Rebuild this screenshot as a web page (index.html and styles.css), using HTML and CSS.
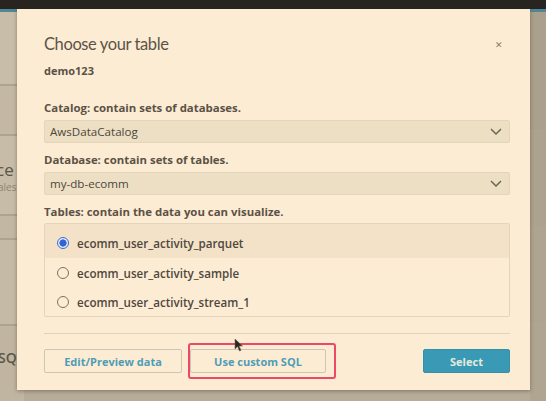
FILE: index.html
```html
<!DOCTYPE html>
<html>
<head>
<meta charset="utf-8">
<link rel="stylesheet" href="styles.css">
</head>
<body>
<div class="app">
  <div class="topbar"></div>
  <div class="backdrop">
    <div class="col-left">
      <div class="panel p1"></div>
      <div class="panel p2"></div>
      <div class="panel p3"><span class="bg-title">ce</span><span class="bg-sub">ales</span></div>
      <div class="panel p4"></div>
      <div class="panel p5"></div>
      <div class="panel p6"><span class="bg-title">SQL</span></div>
    </div>
    <div class="col-mid"></div>
    <div class="col-right">
      <div class="panel r1"></div>
      <div class="panel r2"></div>
      <div class="panel r3"></div>
      <div class="panel r4"></div>
    </div>
  </div>

  <div class="modal">
    <div class="modal-head">
      <h1 class="title">Choose your table</h1>
      <span class="close">&#x2715;</span>
    </div>
    <div class="dataset">demo123</div>

    <label class="field-label first">Catalog: contain sets of databases.</label>
    <div class="select"><span>AwsDataCatalog</span>
      <svg class="chev" width="12" height="7" viewBox="0 0 12 7"><path d="M1 1 L6 6 L11 1" fill="none" stroke="#6f665a" stroke-width="1.5"/></svg>
    </div>

    <label class="field-label">Database: contain sets of tables.</label>
    <div class="select"><span>my-db-ecomm</span>
      <svg class="chev" width="12" height="7" viewBox="0 0 12 7"><path d="M1 1 L6 6 L11 1" fill="none" stroke="#6f665a" stroke-width="1.5"/></svg>
    </div>

    <label class="field-label">Tables: contain the data you can visualize.</label>
    <div class="table-list">
      <div class="row selected"><span class="radio on"></span><span>ecomm_user_activity_parquet</span></div>
      <div class="row"><span class="radio"></span><span>ecomm_user_activity_sample</span></div>
      <div class="row last"><span class="radio"></span><span>ecomm_user_activity_stream_1</span></div>
    </div>

    <div class="divider"></div>

    <div class="footer">
      <button class="btn edit">Edit/Preview data</button>
      <span class="highlight"><button class="btn sql">Use custom SQL</button></span>
      <span class="spacer"></span>
      <button class="btn primary">Select</button>
    </div>
    <svg class="cursor" width="10" height="14" viewBox="0 0 10 14"><path d="M1 1 L1 11 L3.5 8.5 L5.5 13 L7 12.3 L5 8 L8.5 8 Z" fill="#2b2620" stroke="#6a6256" stroke-width="0.6"/></svg>
  </div>
</div>
</body>
</html>
```

FILE: styles.css
```css
* { box-sizing: border-box; }
html, body { margin: 0; padding: 0; }
body {
  width: 546px;
  height: 401px;
  overflow: hidden;
  background: #b4aa97;
  font-family: "Open Sans", "Noto Sans", sans-serif;
}
.app { position: relative; width: 546px; height: 401px; }
.topbar { height: 9px; background: #28241f; }
.backdrop {
  display: flex;
  height: 392px;
  border-top: 3px solid #4f8797;
}
.col-left {
  width: 24px;
  display: flex;
  flex-direction: column;
  background: #bfb4a0;
}
.panel { border-bottom: 2px solid #ada390; position: relative; overflow: hidden; }
.p1 { height: 74px; background: #c8bda9; }
.p2 { height: 50px; background: #c3b8a4; }
.p3 { height: 80px; background: #c7bca8; }
.p4 { height: 24px; background: #c2b7a3; }
.p5 { height: 86px; background: #c5baa6; }
.p6 { flex: 1; background: #c0b5a1; border-bottom: none; }
.bg-title { position: absolute; left: -4px; top: 22px; font-size: 17px; color: #5d554a; }
.p6 .bg-title { top: 22px; font-size: 14px; font-weight: 600; left: -2px; }
.bg-sub { position: absolute; left: -2px; top: 44px; font-size: 10px; color: #8d8472; }
.col-mid { flex: 1; background: #b6ac99; }
.col-right {
  width: 16px;
  display: flex;
  flex-direction: column;
  background: #aba18d;
}
.r1 { height: 120px; background: #aaa08c; }
.r2 { height: 95px; background: #aca28e; }
.r3 { height: 95px; background: #aea490; }
.r4 { flex: 1; background: #afa591; border-bottom: none; }

.modal {
  position: absolute;
  left: 17px;
  top: 9px;
  width: 513px;
  height: 381px;
  background: #fdecd4;
  box-shadow: 0 1px 4px rgba(60, 50, 35, 0.45);
  padding: 24px 20px 17px 27px;
  display: flex;
  flex-direction: column;
  color: #5a5146;
}
.modal-head { display: flex; align-items: center; justify-content: space-between; height: 22px; }
.title {
  margin: 0;
  font-family: "Lato", "Open Sans", sans-serif;
  font-size: 16.5px;
  font-weight: 400;
  line-height: 22px;
  color: #5c5348;
  letter-spacing: -0.4px;
}
.close { font-size: 9px; color: #857b6c; margin-right: 7px; margin-top: 1px; }
.dataset { margin-top: 9px; font-size: 11px; font-weight: 700; line-height: 14px; color: #5a5146; }
.field-label { display: block; margin-top: 10px; font-size: 11.4px; font-weight: 700; line-height: 14px; color: #5b5246; }
.field-label.first { margin-top: 23px; }
.select {
  margin-top: 5px;
  height: 25px;
  background: #ecdfc4;
  border: 1px solid #e3d5b9;
  border-radius: 2px;
  display: flex;
  align-items: center;
  justify-content: space-between;
  padding: 0 7px 0 5px;
  font-size: 11.6px;
  color: #4e463c;
}
.chev { display: block; }
.table-list {
  margin-top: 4px;
  border: 1px solid #e3d5b9;
  border-radius: 2px;
  display: flex;
  flex-direction: column;
}
.row {
  height: 30px;
  display: flex;
  align-items: center;
  padding-left: 12px;
  font-size: 11.6px;
  font-weight: 600;
  color: #4f473d;
}
.row.selected { height: 34px; padding-top: 4px; background: #f3e2c7; }
.row.last { height: 28px; }
.radio {
  width: 12px;
  height: 12px;
  border-radius: 50%;
  border: 1.3px solid #7c7365;
  margin-right: 8px;
  flex: none;
}
.radio.on {
  border: 1.5px solid #3a6bd4;
  background: radial-gradient(circle, #2f63d6 0 3.3px, #e8ecf5 3.9px);
}
.divider { margin-top: 16px; height: 1px; background: #e1d3b8; }
.footer { margin-top: 15px; display: flex; align-items: center; }
.btn {
  height: 24px;
  font-family: inherit;
  font-size: 11px;
  font-weight: 700;
  border-radius: 2px;
  padding: 0;
}
.edit, .sql {
  background: #fdecd4;
  border: 1.5px solid #cbc6b4;
  color: #4e9db6;
}
.edit { width: 138px; }
.highlight { position: relative; margin-left: 8px; display: flex; }
.highlight::after {
  content: "";
  position: absolute;
  left: -2px;
  top: -6px;
  right: -10px;
  bottom: -6px;
  border: 2px solid #ec4868;
  border-radius: 3px;
}
.sql { width: 136px; }
.spacer { flex: 1; }
.primary {
  width: 87px;
  background: #3a9ab6;
  border: 1px solid #3590aa;
  color: #e4eadb;
}
.cursor { position: absolute; left: 217px; top: 329px; }
```
